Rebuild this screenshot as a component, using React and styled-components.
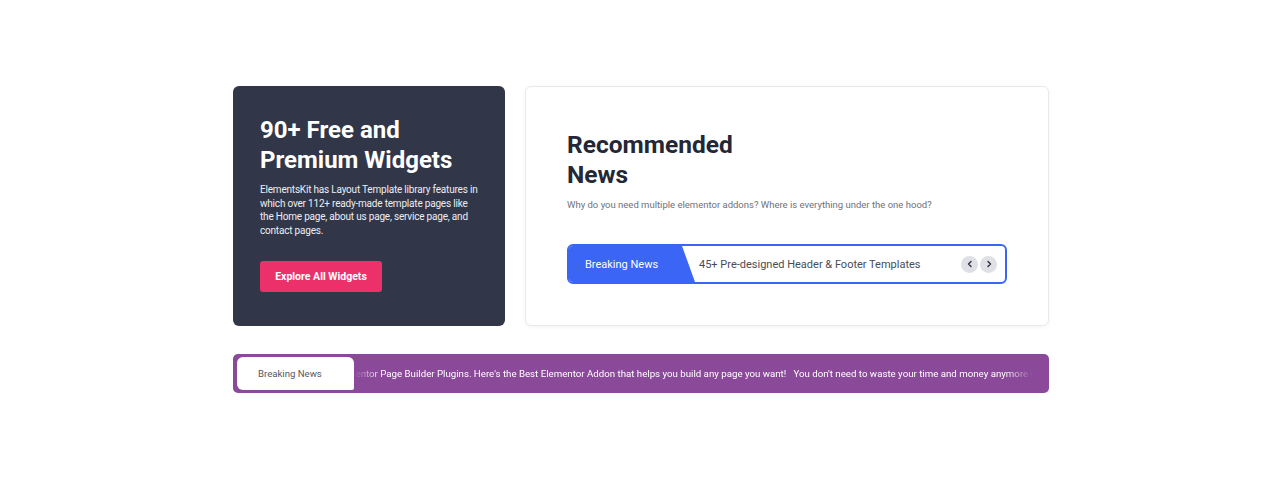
import React from "react";
import styled, { createGlobalStyle } from "styled-components";

const Global = createGlobalStyle`
  html, body { margin: 0; padding: 0; background: #ffffff; }
  body { font-family: Roboto, "Liberation Sans", Arial, sans-serif; }
  * { box-sizing: border-box; }
`;

const Page = styled.div`
  width: 816px;
  margin: 86px 0 0 calc(50% - 407px);
  display: flex;
  flex-direction: column;
  gap: 28px;
`;

const Row = styled.div`
  display: flex;
  gap: 20px;
`;

const DarkCard = styled.div`
  width: 272px;
  height: 240px;
  background: #313649;
  border-radius: 6px;
  padding: 29px 27px 0;
  display: flex;
  flex-direction: column;
  align-items: flex-start;
`;

const DarkTitle = styled.h2`
  margin: 0;
  font-size: 24px;
  line-height: 30px;
  font-weight: 700;
  color: #ffffff;
`;

const DarkText = styled.p`
  margin: 8px 0 0;
  font-size: 10px;
  letter-spacing: -0.2px;
  line-height: 13.7px;
  color: #eceef3;
  font-weight: 400;
`;

const PinkButton = styled.button`
  margin-top: 23px;
  width: 122px;
  height: 31px;
  border: none;
  border-radius: 3px;
  background: #eb306a;
  color: #fff;
  font-family: inherit;
  font-size: 10.5px;
  font-weight: 700;
  cursor: pointer;
`;

const WhiteCard = styled.div`
  width: 524px;
  height: 240px;
  background: #fff;
  border: 1px solid #e9e9ec;
  border-radius: 6px;
  box-shadow: 0 1px 4px rgba(0, 0, 0, 0.05);
  padding: 43px 41px 0;
  display: flex;
  flex-direction: column;
`;

const NewsTitle = styled.h2`
  margin: 0;
  font-size: 24.5px;
  line-height: 30px;
  font-weight: 700;
  color: #232736;
`;

const Subtitle = styled.p`
  margin: 8px 0 0;
  font-size: 9.5px;
  line-height: 14px;
  color: #6f717a;
`;

const Ticker = styled.div`
  margin-top: 32px;
  width: 440px;
  height: 40px;
  border: 2px solid #3b65f5;
  border-radius: 6px;
  display: flex;
  align-items: center;
  overflow: hidden;
  padding-right: 8px;
`;

const TickerLabel = styled.div`
  align-self: stretch;
  width: 126px;
  flex: none;
  background: #3b65f5;
  clip-path: polygon(0 0, 113px 0, 126px 100%, 0 100%);
  color: #fff;
  font-size: 11px;
  display: flex;
  align-items: center;
  padding-left: 16px;
`;

const TickerText = styled.div`
  flex: 1;
  padding-left: 4px;
  font-size: 11px;
  color: #4a4c55;
`;

const NavGroup = styled.div`
  display: flex;
  gap: 2px;
`;

const NavBtn = styled.button`
  width: 17px;
  height: 17px;
  border-radius: 50%;
  border: none;
  background: #dfe0e5;
  padding: 0;
  display: flex;
  align-items: center;
  justify-content: center;
  color: #2b2f3b;
`;

const Bar = styled.div`
  height: 39px;
  background: #8a4a99;
  border-radius: 5px;
  padding: 3px 4px 3px 4px;
  display: flex;
  align-items: stretch;
`;

const BarLabel = styled.div`
  width: 117px;
  flex: none;
  background: #fff;
  border-radius: 6px 6px 2px 6px;
  display: flex;
  align-items: center;
  padding-left: 21px;
  font-size: 9.6px;
  color: #555863;
`;

const Marquee = styled.div`
  flex: 1;
  overflow: hidden;
  display: flex;
  align-items: center;
  -webkit-mask-image: linear-gradient(to right, transparent 0, #000 28px, #000 calc(100% - 40px), transparent calc(100% - 12px));
  mask-image: linear-gradient(to right, transparent 0, #000 28px, #000 calc(100% - 40px), transparent calc(100% - 12px));
`;

const Track = styled.div`
  white-space: nowrap;
  font-size: 9.7px;
  color: #ffffff;
  margin-left: ${(p) => p.$offset}px;
`;

const Chevron = ({ dir }) => (
  <svg width="8" height="8" viewBox="0 0 8 8" fill="none">
    <path
      d={dir === "left" ? "M5 1.5 L2.5 4 L5 6.5" : "M3 1.5 L5.5 4 L3 6.5"}
      stroke="currentColor"
      strokeWidth="1.4"
      strokeLinecap="round"
      strokeLinejoin="round"
    />
  </svg>
);

export default function App() {
  return (
    <>
      <Global />
      <Page>
        <Row>
          <DarkCard>
            <DarkTitle>
              90+ Free and
              <br />
              Premium Widgets
            </DarkTitle>
            <DarkText>
              ElementsKit has Layout Template library features in which over 112+ ready-made template pages like the Home page, about us page, service page, and contact pages.
            </DarkText>
            <PinkButton>Explore All Widgets</PinkButton>
          </DarkCard>
          <WhiteCard>
            <NewsTitle>
              Recommended
              <br />
              News
            </NewsTitle>
            <Subtitle>
              Why do you need multiple elementor addons? Where is everything under the one hood?
            </Subtitle>
            <Ticker>
              <TickerLabel>Breaking News</TickerLabel>
              <TickerText>45+ Pre-designed Header &amp; Footer Templates</TickerText>
              <NavGroup>
                <NavBtn aria-label="previous">
                  <Chevron dir="left" />
                </NavBtn>
                <NavBtn aria-label="next">
                  <Chevron dir="right" />
                </NavBtn>
              </NavGroup>
            </Ticker>
          </WhiteCard>
        </Row>
        <Bar>
          <BarLabel>Breaking News</BarLabel>
          <Marquee>
            <Track $offset={-20}>
              Elementor Page Builder Plugins. Here's the Best Elementor Addon that helps you build any page you want!&nbsp;&nbsp;&nbsp;You don't need to waste your time and money anymore on buying multiple addons.
            </Track>
          </Marquee>
        </Bar>
      </Page>
    </>
  );
}
